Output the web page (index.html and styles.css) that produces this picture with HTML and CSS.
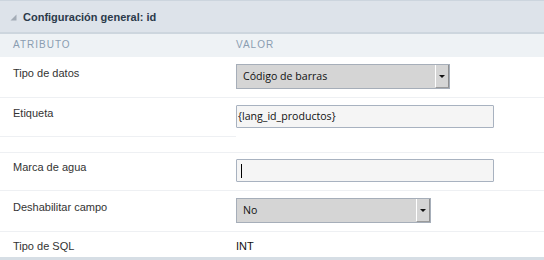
FILE: index.html
```html
<!DOCTYPE html>
<html lang="es">
<head>
<meta charset="utf-8">
<title>Configuración general: id</title>
<link rel="stylesheet" href="styles.css">
</head>
<body>
<div class="panel">
  <div class="panel-head">
    <svg class="tri" width="7" height="7" viewBox="0 0 7 7"><polygon points="6.5,0.5 6.5,6.5 0.5,6.5" fill="#a3acb6"/></svg>
    <span class="panel-title">Configuración general: id</span>
  </div>
  <table class="props">
    <thead>
      <tr class="colhead">
        <th class="c-attr">Atributo</th>
        <th class="c-val">Valor</th>
      </tr>
    </thead>
    <tbody>
      <tr class="r1">
        <td class="lbl">Tipo de datos</td>
        <td class="val">
          <div class="select sel-wide"><span class="sel-text">Código de barras</span><span class="sel-btn"><span class="arrow"></span></span></div>
        </td>
      </tr>
      <tr class="r2">
        <td class="lbl">Etiqueta</td>
        <td class="val" rowspan="2">
          <div class="input"><span class="in-text">{lang_id_productos}</span></div>
        </td>
      </tr>
      <tr class="r2b">
        <td class="lbl empty"></td>
      </tr>
      <tr class="r3">
        <td class="lbl">Marca de agua</td>
        <td class="val"><div class="input"><span class="caret"></span></div></td>
      </tr>
      <tr class="r4">
        <td class="lbl">Deshabilitar campo</td>
        <td class="val">
          <div class="select sel-narrow"><span class="sel-text">No</span><span class="sel-btn"><span class="arrow"></span></span></div>
        </td>
      </tr>
      <tr class="r5">
        <td class="lbl">Tipo de SQL</td>
        <td class="val plain">INT</td>
      </tr>
    </tbody>
  </table>
</div>
</body>
</html>
```

FILE: styles.css
```css
html, body {
  margin: 0;
  padding: 0;
  background: #ffffff;
}
body {
  width: 544px;
  height: 260px;
  overflow: hidden;
  font-family: "Liberation Sans", Arial, sans-serif;
}
.panel {
  width: 544px;
  border-bottom: 3px solid #d6dee5;
}
.panel-head {
  display: flex;
  align-items: center;
  height: 31px;
  background: #dde3ea;
  border-top: 1px solid #ccd5de;
  border-bottom: 2px solid #cdd6de;
  padding-left: 10px;
  box-sizing: content-box;
}
.tri {
  display: block;
  margin-top: 2px;
  margin-right: 6px;
}
.panel-title {
  font-size: 11px;
  font-weight: bold;
  color: #2b3a4a;
  line-height: 13px;
  margin-top: 1px;
}
.props {
  width: 544px;
  border-collapse: separate;
  border-spacing: 0;
  table-layout: fixed;
}
.colhead th {
  background: #eef2f5;
  font-size: 10px;
  font-weight: normal;
  letter-spacing: 1px;
  text-transform: uppercase;
  color: #8a9db1;
  text-align: left;
  line-height: 11px;
  padding: 5px 0 7px 0;
}
.c-attr {
  width: 223px;
  padding-left: 13px !important;
}
td {
  vertical-align: top;
  border-bottom: 1px solid #eef0f3;
  padding: 0;
}
.lbl {
  font-size: 11px;
  line-height: 14px;
  color: #333333;
  padding-left: 13px;
}
.val {
  font-size: 11px;
}
.r1 .lbl { padding-top: 9px; }
.r1 .val { padding-top: 7px; padding-bottom: 8px; }
.r2 .lbl { padding-top: 8px; height: 16px; padding-bottom: 14px; }
.r2 .val { padding-top: 7px; }
.r2b .empty { height: 15px; }
.r3 .lbl { padding-top: 7px; }
.r3 .val { padding-top: 6px; padding-bottom: 8px; }
.r4 .lbl { padding-top: 9px; }
.r4 .val { padding-top: 7px; padding-bottom: 8px; }
.r5 td { border-bottom: none; }
.r5 .lbl { padding-top: 7px; padding-bottom: 4px; }
.r5 .plain {
  padding-top: 7px;
  line-height: 14px;
  color: #111111;
}

.select {
  display: flex;
  align-items: stretch;
  height: 25px;
  box-sizing: border-box;
  border: 1px solid #a6aeb9;
  background: #d5d5d5;
  font-family: "Open Sans", "Noto Sans", sans-serif;
  font-size: 10.6px;
  color: #111111;
}
.sel-wide { width: 214px; }
.sel-narrow { width: 195px; }
.sel-text {
  flex: 1;
  padding-left: 6px;
  line-height: 23px;
}
.sel-btn {
  width: 12px;
  display: flex;
  align-items: center;
  justify-content: center;
  border-left: 1px solid #ffffff;
  border-right: 1px solid #8f8f8f;
  border-bottom: 1px solid #9a9a9a;
}
.arrow {
  width: 0;
  height: 0;
  border-left: 3px solid transparent;
  border-right: 3px solid transparent;
  border-top: 3px solid #111111;
  margin-top: 1px;
}
.input {
  width: 258px;
  height: 23px;
  box-sizing: border-box;
  border: 1px solid #a8b2c0;
  border-radius: 1px;
  background: #f5f5f5;
  font-family: "Open Sans", "Noto Sans", sans-serif;
  font-size: 10.6px;
  color: #111111;
  display: flex;
  align-items: center;
  padding-left: 1px;
}
.in-text {
  line-height: 21px;
}
.caret {
  display: block;
  width: 1px;
  height: 14px;
  background: #000000;
  margin-left: 3px;
}
```
